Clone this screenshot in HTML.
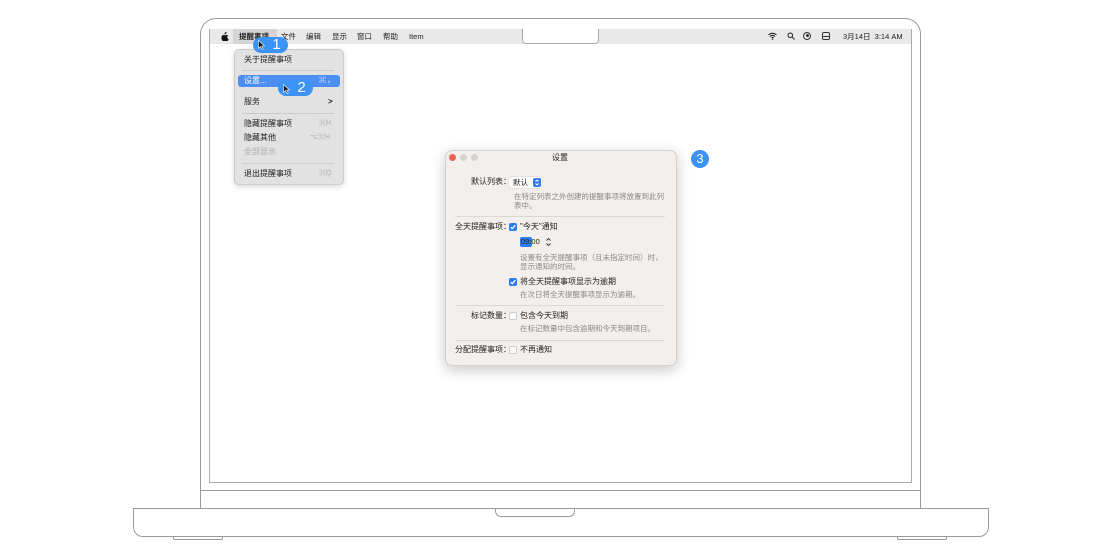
<!DOCTYPE html><html><head><meta charset="utf-8"><style>
*{margin:0;padding:0;box-sizing:border-box}
body{width:1120px;height:560px;background:#fff;position:relative;overflow:hidden;font-family:"Liberation Sans","Noto Sans CJK SC",sans-serif;color:#222}
.a{position:absolute}
.t{position:absolute;font-size:8px;white-space:nowrap;line-height:10px}
.sep{position:absolute;height:1px;background:#dcd8d5}
.cb{position:absolute;width:8px;height:8px;border-radius:2px}
.on{background:#2f7bf0}
.off{background:#fff;border:1px solid #ccc}
.badge{position:absolute;background:#3d93f5;color:#fff;border-radius:8px;font-size:15px;text-align:center;line-height:16px}
.chk{position:absolute;left:0;top:0}
</style></head><body>
<!-- lid -->
<div class="a" style="left:200px;top:18px;width:721px;height:474px;border:1.5px solid #9a9a9a;border-bottom:none;border-radius:16px 16px 0 0"></div>
<div class="a" style="left:209px;top:29px;width:703px;height:454px;border:1px solid #aaa;border-top:none"></div>
<div class="a" style="left:200px;top:490px;width:721px;height:19px;border:1.5px solid #9a9a9a;border-bottom:none"></div>
<div class="a" style="left:133px;top:508px;width:856px;height:29px;border:1.5px solid #9a9a9a;border-radius:0 0 10px 10px"></div>
<div class="a" style="left:495px;top:508px;width:80px;height:9px;border:1px solid #9a9a9a;border-top:none;border-radius:0 0 6px 6px"></div>
<div class="a" style="left:173px;top:536px;width:50px;height:4px;border:1px solid #9a9a9a;border-top:none;border-radius:0 0 2px 2px"></div>
<div class="a" style="left:897px;top:536px;width:50px;height:4px;border:1px solid #9a9a9a;border-top:none;border-radius:0 0 2px 2px"></div>
<!-- menubar -->
<div class="a" style="left:210px;top:29px;width:701px;height:15px;background:#eae9e9"></div>
<div class="a" style="left:522px;top:29px;width:77px;height:15px;background:#fff;border:1px solid #aaa;border-top:none;border-radius:0 0 4px 4px"></div>
<svg class="a" style="left:221px;top:32px" width="8" height="9" viewBox="0 0 16 18"><path d="M11 0c.2 1.3-.4 2.5-1.1 3.3-.8.9-1.9 1.5-3 1.4-.2-1.2.4-2.5 1.1-3.3C8.8.6 10 0 11 0zM14.6 6.2c-1.4.9-2.2 2.3-2.2 3.9 0 1.9 1.2 3.5 2.9 4.1-.4 1.1-.9 2.1-1.6 3-.8 1-1.6 1.9-2.7 1.9-1.1 0-1.5-.7-2.8-.7s-1.8.7-2.8.7C4.3 19.1 3.5 18 2.7 17 1 14.6 0 10.9 1.6 8.2c.8-1.4 2.2-2.2 3.7-2.3 1.1 0 2.1.7 2.8.7.7 0 1.9-.9 3.2-.8.6 0 2.2.2 3.3 1.4z" fill="#111"/></svg>
<div class="a" style="left:233px;top:29px;width:44px;height:15px;background:#d6d5d5"></div>
<div class="t" style="left:239px;top:32px;font-size:7.5px;font-weight:bold">提醒事项</div>
<div class="t" style="left:281px;top:32px;font-size:7.5px">文件</div>
<div class="t" style="left:306px;top:32px;font-size:7.5px">编辑</div>
<div class="t" style="left:332px;top:32px;font-size:7.5px">显示</div>
<div class="t" style="left:357px;top:32px;font-size:7.5px">窗口</div>
<div class="t" style="left:383px;top:32px;font-size:7.5px">帮助</div>
<div class="t" style="left:409px;top:32px;font-size:7.5px">Item</div>
<svg class="a" style="left:768px;top:32px" width="9" height="8" viewBox="0 0 18 16"><path d="M1 6a11 11 0 0 1 16 0M4 9a7 7 0 0 1 10 0M7 12a3 3 0 0 1 4 0" stroke="#222" stroke-width="2.2" fill="none"/><circle cx="9" cy="14.5" r="1.3" fill="#222"/></svg>
<svg class="a" style="left:787px;top:32px" width="8" height="8" viewBox="0 0 16 16"><circle cx="6.5" cy="6.5" r="4.5" stroke="#222" stroke-width="2" fill="none"/><path d="M10 10l5 5" stroke="#222" stroke-width="2"/></svg>
<div class="a" style="left:803px;top:32px;width:8px;height:8px;border:1.3px solid #333;border-radius:50%"></div>
<div class="a" style="left:805.5px;top:34px;width:3px;height:3px;background:#333;border-radius:50%"></div>
<div class="a" style="left:822px;top:32px;width:8px;height:8px;border:1.5px solid #333;border-radius:2px"></div>
<div class="a" style="left:822px;top:35.5px;width:8px;height:1.5px;background:#333"></div>
<div class="t" style="left:843px;top:32px;font-size:7.5px">3月14日&nbsp; 3:14 AM</div>
<!-- menu -->
<div class="a" style="left:234px;top:49px;width:110px;height:136px;background:#e3e2e2;border:1px solid #ccc;border-radius:5px;box-shadow:0 2px 6px rgba(0,0,0,.15)"></div>
<div class="t" style="left:244px;top:55px">关于提醒事项</div>
<div class="sep" style="left:242px;top:70px;width:92px;background:#ccc"></div>
<div class="a" style="left:238px;top:75px;width:102px;height:12px;background:#4d8ef2;border-radius:3px"></div>
<div class="t" style="left:244px;top:76px;color:#fff">设置...</div>
<div class="t" style="left:319px;top:76px;color:#fff;font-size:7px;font-weight:bold">⌘ ,</div>
<div class="t" style="left:244px;top:97px">服务</div>
<div class="t" style="left:328px;top:97px;font-weight:bold">&gt;</div>
<div class="sep" style="left:242px;top:113px;width:92px;background:#ccc"></div>
<div class="t" style="left:244px;top:119px">隐藏提醒事项</div><div class="t" style="left:319px;top:119px;color:#aaa;font-size:7px">⌘H</div>
<div class="t" style="left:244px;top:133px">隐藏其他</div><div class="t" style="left:310px;top:133px;color:#aaa;font-size:7px">⌥⌘H</div>
<div class="t" style="left:244px;top:147px;color:#aaa">全部显示</div>
<div class="sep" style="left:242px;top:163px;width:92px;background:#ccc"></div>
<div class="t" style="left:244px;top:169px">退出提醒事项</div><div class="t" style="left:319px;top:169px;color:#aaa;font-size:7px">⌘Q</div>
<div class="badge" style="left:253px;top:37px;width:35px;padding-left:12px">1</div>
<svg class="a" style="left:258px;top:40px" width="7" height="10" viewBox="0 0 7 10"><path d="M0.5 0.5v8l2-2 1.5 3 1.2-.6-1.5-2.9h2.8z" fill="#111" stroke="#fff" stroke-width=".6"/></svg>
<div class="badge" style="left:278px;top:80px;width:35px;padding-left:12px">2</div>
<svg class="a" style="left:283px;top:84px" width="7" height="10" viewBox="0 0 7 10"><path d="M0.5 0.5v8l2-2 1.5 3 1.2-.6-1.5-2.9h2.8z" fill="#111" stroke="#fff" stroke-width=".6"/></svg>
<!-- dialog -->
<div class="a" style="left:445px;top:150px;width:232px;height:216px;background:#f2efec;border:1px solid #d4d0cd;border-radius:7px;box-shadow:0 4px 14px rgba(0,0,0,.22)"></div>
<div class="a" style="left:449px;top:154px;width:7px;height:7px;border-radius:50%;background:#ee5f57"></div>
<div class="a" style="left:460px;top:154px;width:7px;height:7px;border-radius:50%;background:#d5d2cf"></div>
<div class="a" style="left:471px;top:154px;width:7px;height:7px;border-radius:50%;background:#d5d2cf"></div>
<div class="t" style="left:552px;top:153px">设置</div>
<div class="t" style="left:471px;top:177px">默认列表：</div>
<div class="a" style="left:509px;top:177px;width:33px;height:11px;background:#fff;border-radius:3px;box-shadow:0 0 1px #999"></div>
<div class="t" style="left:513px;top:178px;font-size:7.5px">默认</div>
<div class="a" style="left:533px;top:178px;width:8px;height:9px;background:#2f7bf0;border-radius:2px"></div>
<svg class="a" style="left:533px;top:178px" width="8" height="9" viewBox="0 0 8 9"><path d="M2.5 3.5L4 2l1.5 1.5M2.5 5.5L4 7l1.5-1.5" stroke="#fff" fill="none" stroke-width="1"/></svg>
<div class="t" style="left:514px;top:192px;color:#888;font-size:7.5px;line-height:9px">在特定列表之外创建的提醒事项将放置到此列<br>表中。</div>
<div class="sep" style="left:455px;top:216px;width:210px"></div>
<div class="t" style="left:455px;top:222px">全天提醒事项：</div>
<div class="cb on" style="left:509px;top:223px"><svg class="chk" width="8" height="8" viewBox="0 0 8 8"><path d="M1.8 4.2l1.5 1.5 3-3.5" stroke="#fff" stroke-width="1.2" fill="none"/></svg></div>
<div class="t" style="left:520px;top:222px">"今天"通知</div>
<div class="a" style="left:520px;top:237px;width:12px;height:10px;background:#2f7bf0;border-radius:2px"></div>
<div class="t" style="left:521px;top:237px;font-size:7.5px">09:00</div>
<svg class="a" style="left:545px;top:236px" width="7" height="12" viewBox="0 0 7 12"><path d="M1.5 4.5L3.5 2.5 5.5 4.5M1.5 7.5L3.5 9.5 5.5 7.5" stroke="#333" fill="none" stroke-width=".9"/></svg>
<div class="t" style="left:520px;top:253px;color:#888;font-size:7.5px;line-height:9px">设置有全天提醒事项（且未指定时间）时，<br>显示通知的时间。</div>
<div class="cb on" style="left:509px;top:278px"><svg class="chk" width="8" height="8" viewBox="0 0 8 8"><path d="M1.8 4.2l1.5 1.5 3-3.5" stroke="#fff" stroke-width="1.2" fill="none"/></svg></div>
<div class="t" style="left:520px;top:277px">将全天提醒事项显示为逾期</div>
<div class="t" style="left:520px;top:290px;color:#888;font-size:7.5px">在次日将全天提醒事项显示为逾期。</div>
<div class="sep" style="left:455px;top:305px;width:210px"></div>
<div class="t" style="left:471px;top:311px">标记数量：</div>
<div class="cb off" style="left:509px;top:312px"></div>
<div class="t" style="left:520px;top:311px">包含今天到期</div>
<div class="t" style="left:520px;top:324px;color:#888;font-size:7.5px">在标记数量中包含逾期和今天到期项目。</div>
<div class="sep" style="left:455px;top:340px;width:210px"></div>
<div class="t" style="left:455px;top:345px">分配提醒事项：</div>
<div class="cb off" style="left:509px;top:346px"></div>
<div class="t" style="left:520px;top:345px">不再通知</div>
<div class="badge" style="left:691px;top:150px;width:18px;height:18px;border-radius:50%;font-size:13px;line-height:18px">3</div>
</body></html>
